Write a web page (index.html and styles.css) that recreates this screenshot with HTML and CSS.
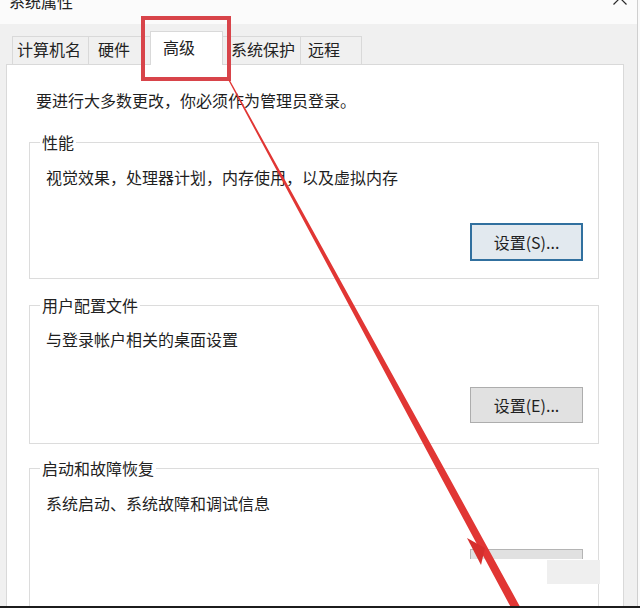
FILE: index.html
```html
<!DOCTYPE html>
<html lang="zh-CN">
<head>
<meta charset="utf-8">
<title>系统属性</title>
<link rel="stylesheet" href="styles.css">
</head>
<body>
<div class="window">
  <div class="titlebar">
    <span class="title">系统属性</span>
    <svg class="close" width="16" height="16" viewBox="0 0 16 16"><path d="M1.5 1.5L14.5 14.5M14.5 1.5L1.5 14.5" stroke="#2a2a2a" stroke-width="1.2" fill="none"/></svg>
  </div>
  <div class="tabs">
    <div class="tab tab-name">计算机名</div>
    <div class="tab tab-hw">硬件</div>
    <div class="tab tab-adv active">高级</div>
    <div class="tab tab-prot">系统保护</div>
    <div class="tab tab-remote">远程</div>
  </div>
  <div class="panel">
    <p class="intro">要进行大多数更改，你必须作为管理员登录。</p>
    <fieldset class="group">
      <legend>性能</legend>
      <div class="group-body">
        <p class="desc">视觉效果，处理器计划，内存使用，以及虚拟内存</p>
        <div class="actions"><button class="btn btn-focus">设置(S)...</button></div>
      </div>
    </fieldset>
    <fieldset class="group group-profile">
      <legend>用户配置文件</legend>
      <div class="group-body body-profile">
        <p class="desc">与登录帐户相关的桌面设置</p>
        <div class="actions actions-profile"><button class="btn">设置(E)...</button></div>
      </div>
    </fieldset>
    <fieldset class="group group-startup">
      <legend>启动和故障恢复</legend>
      <div class="group-body body-startup">
        <p class="desc">系统启动、系统故障和调试信息</p>
        <div class="actions"><div class="btn-strip"></div></div>
      </div>
    </fieldset>
  </div>
  <div class="smudge"></div>
  <div class="annot-box"></div>
  <svg class="arrow" width="640" height="608" viewBox="0 0 640 608">
    <polygon fill="#e13634" points="228.4,80.3 336,281 443.4,481.7 517.7,620 525.1,616 449.6,478.3 339.6,279 229.6,79.7"/>
    <polygon fill="#d62f2d" points="467,538 485,548 481,565"/>
  </svg>
</div>
</body>
</html>
```

FILE: styles.css
```css
* { box-sizing: border-box; }

html, body {
  margin: 0;
  padding: 0;
}

body {
  width: 640px;
  height: 608px;
  overflow: hidden;
  background: #fafafa;
  font-family: "Noto Sans CJK SC", "Noto Sans", sans-serif;
  color: #1f1f1f;
}

.window {
  position: relative;
  width: 640px;
  height: 608px;
  overflow: hidden;
  border-bottom: 2px solid #1c1c1c;
  background: linear-gradient(to right, #f0f0f0 0, #f0f0f0 637px, #cfcfcf 637px, #cfcfcf 638px, #fafafa 638px);
}

.titlebar {
  display: flex;
  align-items: flex-start;
  width: 637px;
  height: 24px;
  background: #fbfbfb;
}

.title {
  margin: -7px 0 0 9px;
  font-size: 16px;
  line-height: 16px;
  color: #222;
}

.close {
  margin: -10px 9px 0 auto;
}

.tabs {
  display: flex;
  align-items: flex-end;
  height: 40px;
  padding-left: 12px;
  position: relative;
  z-index: 2;
}

.tab {
  height: 28px;
  margin-left: -1px;
  border: 1px solid #d9d9d9;
  border-bottom: none;
  background: #f0f0f0;
  font-size: 16px;
  line-height: 25px;
  white-space: nowrap;
  color: #222;
}

.tab:first-child { margin-left: 0; }

.tab-name { width: 77px; padding-left: 4px; }
.tab-hw { width: 63px; padding-left: 9px; }
.tab-adv { width: 73px; padding-left: 12px; }
.tab-prot { width: 79px; padding-left: 8px; }
.tab-remote { width: 62px; padding-left: 7px; }

.tab.active {
  height: 34px;
  margin-bottom: -1px;
  background: #ffffff;
  line-height: 30px;
}

.panel {
  width: 618px;
  min-height: 600px;
  margin-left: 6px;
  padding: 25px 25px 0 22px;
  border: 1px solid #d9d9d9;
  background: #ffffff;
}

.intro {
  margin: 0 0 22px 7px;
  font-size: 16px;
  line-height: 20px;
}

.group {
  width: 570px;
  min-width: 0;
  margin: 0 0 16px 0;
  padding: 0;
  border: 1px solid #dcdcdc;
}

.group legend {
  margin-left: 10px;
  padding: 0 2px;
  font-size: 16px;
  line-height: 20px;
  color: #222;
}

.group-startup { margin-top: -2px; }

.group-body {
  padding: 15px 15px 17px 16px;
}

.body-profile {
  padding-top: 14px;
  padding-bottom: 20px;
}

.body-startup {
  padding-bottom: 80px;
}

.desc {
  margin: 0;
  font-size: 16px;
  line-height: 20px;
}

.actions {
  display: flex;
  justify-content: flex-end;
  margin-top: 36px;
}

.actions-profile { margin-top: 38px; }

.btn {
  width: 113px;
  height: 36px;
  padding: 0;
  border: 1px solid #adadad;
  background: #e1e1e1;
  font-family: "Noto Sans CJK SC", "Noto Sans", sans-serif;
  font-size: 16px;
  color: #1f1f1f;
}

.btn-focus {
  height: 38px;
  border: 2px solid #31709f;
  background: #e2e9ef;
}

.btn-strip {
  width: 113px;
  height: 10px;
  border: 1px solid #b4b4b4;
  border-bottom: none;
  background: #e1e1e1;
}

.smudge {
  position: absolute;
  left: 547px;
  top: 560px;
  width: 53px;
  height: 24px;
  background: #efefef;
}

.annot-box {
  position: absolute;
  left: 141px;
  top: 16px;
  width: 90px;
  height: 65px;
  border: 4px solid #d8444a;
  z-index: 3;
}

.arrow {
  position: absolute;
  left: 0;
  top: 0;
  z-index: 4;
  pointer-events: none;
}
```
